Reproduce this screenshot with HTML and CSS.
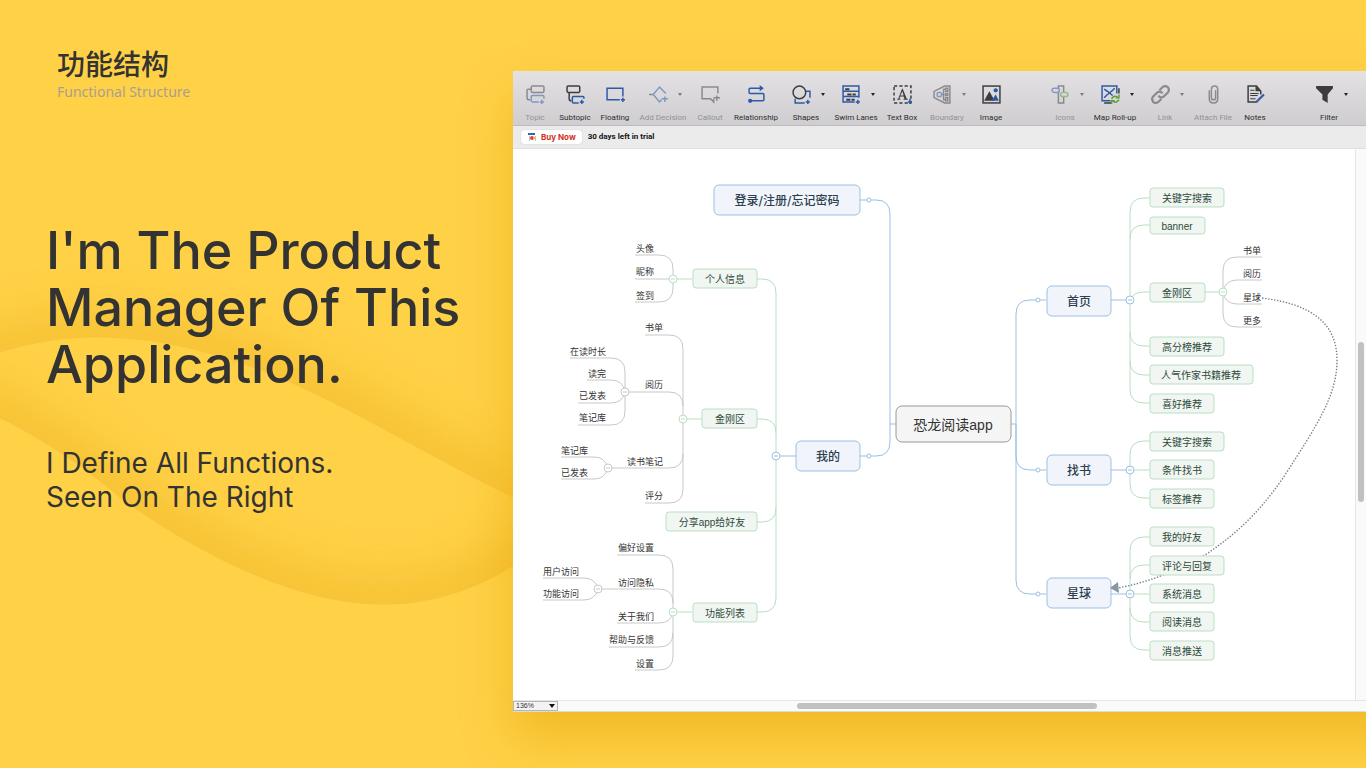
FILE: index.html
```html
<!DOCTYPE html>
<html lang="zh-CN">
<head>
<meta charset="utf-8">
<meta name="viewport" content="width=device-width, initial-scale=1">
<title>功能结构</title>
<link rel="stylesheet" href="styles.css">
</head>
<body>
<main class="page">
  <section class="intro">
    <svg class="wave" viewBox="0 0 513 768" preserveAspectRatio="none" aria-hidden="true">
      <defs>
        <filter id="soft" x="-20%" y="-40%" width="140%" height="180%"><feGaussianBlur stdDeviation="24"/></filter>
        <clipPath id="above"><path d="M0 0H513V497C440 462 370 418 290 382C240 360 170 337 98 337C70 337 40 340 0 352Z"/></clipPath>
        <clipPath id="inside"><path d="M0 352C40 340 70 337 98 337C170 337 240 360 290 382C370 418 440 462 513 497V565C480 588 430 604 385 604C290 604 190 548 120 497C90 472 50 442 0 418Z"/></clipPath>
      </defs>
      <g clip-path="url(#above)"><path class="wave-shade" filter="url(#soft)" d="M-60 372C-20 355 60 337 98 337C170 337 240 360 290 382C370 418 440 462 573 530"/></g>
      <g clip-path="url(#inside)"><path class="wave-shade" filter="url(#soft)" d="M-60 390L0 418C50 442 90 472 120 497C190 548 290 604 385 604C430 604 480 588 513 565L560 530"/></g>
    </svg>
    <header class="kicker">
      <h2 class="kicker-title">功能结构</h2>
      <p class="kicker-sub">Functional Structure</p>
    </header>
    <h1 class="headline">I'm The Product<br>Manager Of This<br>Application.</h1>
    <p class="lead">I Define All Functions.<br>Seen On The Right</p>
  </section>

  <section class="window">
    <nav class="toolbar" aria-label="Toolbar">
      <div class="tools tools-main">
        <button class="tool off"><span class="tool-icon"><svg viewBox="0 0 18 18"><rect x="5" y="1" width="12" height="6" rx="1"/><path d="M5 4H2Q1 4 1 5V12Q1 14 3 14H4"/><path class="b" d="M17 13V11Q17 10 16 10H6Q5 10 5 11V15Q5 16 6 16H12M15 14V18M13 16H17"/></svg></span><span>Topic</span></button>
        <button class="tool"><span class="tool-icon"><svg viewBox="0 0 18 18"><rect x="1" y="1" width="12" height="6" rx="1"/><path d="M3 7V13Q3 15 5 15"/><path class="b" d="M17 13V12Q17 11 16 11H7Q6 11 6 12V16Q6 17 7 17H12M15 14V18M13 16H17"/></svg></span><span>Subtopic</span></button>
        <button class="tool"><span class="tool-icon"><svg viewBox="0 0 18 18"><path class="b" d="M16 11V3H1V14H13M16 12V16M14 14H18"/></svg></span><span>Floating</span></button>
        <button class="tool off"><span class="tool-icon"><svg viewBox="0 0 18 18"><path d="M0 9H4"/><path class="b" d="M16 8L10 2L4 9L10 16L12 14M15 11V16M12 13H18"/></svg><i class="caret"></i></span><span>Add Decision</span></button>
        <button class="tool off"><span class="tool-icon"><svg viewBox="0 0 18 18"><path d="M16 8V2H1V13H9L12 16V13M15 10V15M12 12H18"/></svg></span><span>Callout</span></button>
        <button class="tool"><span class="tool-icon"><svg viewBox="0 0 18 18"><path class="b" d="M13 3H3Q2 3 2 4V7Q2 8 3 8H15Q16 8 16 9V14Q16 15 15 15H4"/><path class="bf" d="M12 0L16 3L12 6Z"/><circle class="bf" cx="3" cy="15" r="2"/></svg></span><span>Relationship</span></button>
        <button class="tool"><span class="tool-icon"><svg viewBox="0 0 18 18"><circle cx="7" cy="7" r="6"/><path class="b" d="M13 6H17V12M3 13V17H12M15 14V18M13 16H17"/></svg><i class="caret"></i></span><span>Shapes</span></button>
        <button class="tool"><span class="tool-icon"><svg viewBox="0 0 18 18"><path class="b" d="M16 12V1H1V16H12M1 6H16M1 11H16M15 14V18M13 16H17"/><path class="kf" d="M3 3H7V5H3ZM5 8H9V10H5ZM10 8H13V10H10ZM4 13H8V15H4ZM9 13H12V15H9Z"/></svg><i class="caret"></i></span><span>Swim Lanes</span></button>
        <button class="tool"><span class="tool-icon"><svg viewBox="0 0 18 18"><rect class="dash" x="1" y="1" width="16" height="16"/><path class="kf" d="M9 3L13 13H14V14H10V13H11L10 11H7L6 13H7V14H4V13H5L8 5ZM7 10H10L9 6Z"/><path class="b" d="M16 13V18M14 16H18"/></svg></span><span>Text Box</span></button>
        <button class="tool off"><span class="tool-icon"><svg viewBox="0 0 18 18"><path d="M16 1H11L1 6V12L11 17H16ZM8 9H11M12 4H10V14H12"/><rect x="12" y="3" width="2" height="3"/><rect x="12" y="8" width="2" height="2"/><rect x="12" y="12" width="2" height="3"/><rect class="b" x="4" y="7" width="4" height="4" rx="1"/></svg><i class="caret"></i></span><span>Boundary</span></button>
        <button class="tool"><span class="tool-icon"><svg viewBox="0 0 18 18"><rect x="1" y="1" width="16" height="16"/><path class="kf" d="M2 15L7 6L12 15Z"/><path class="bf" d="M9 15L13 9L16 15Z"/><circle class="bf" cx="13" cy="5" r="2"/></svg></span><span>Image</span></button>
      </div>
      <div class="tools tools-extra">
        <button class="tool off"><span class="tool-icon"><svg viewBox="0 0 18 18"><path d="M7 3V1H12V7M12 11V17H7V7"/><rect class="b" x="1" y="3" width="7" height="4" rx="2"/><rect class="g" x="9" y="7" width="7" height="4" rx="2"/></svg><i class="caret"></i></span><span>Icons</span></button>
        <button class="tool"><span class="tool-icon"><svg viewBox="0 0 18 18"><path d="M3 17H10M17 3V8"/><path class="b" d="M15 8V1H1V15H9M3 4L6 6M13 3L10 6M3 12L6 9M5 5L11 10M5 10L11 5"/><path class="g" d="M10 13Q13 9 16 12M17 9V12H14M17 14Q14 18 11 15M10 18V15H13"/></svg><i class="caret"></i></span><span>Map Roll-up</span></button>
        <button class="tool off"><span class="tool-icon"><svg viewBox="0 0 18 18"><path class="thick" d="M8 5L11 2Q13 0 16 2Q18 5 16 7L12 11Q9 13 7 10"/><path class="thick" d="M10 13L7 16Q4 18 2 16Q0 13 2 11L6 7Q9 5 11 8"/></svg><i class="caret"></i></span><span>Link</span></button>
        <button class="tool off"><span class="tool-icon"><svg viewBox="0 0 18 18"><path d="M11 5V12Q11 14 9 14Q7 14 7 12V4Q7 1 10 1Q13 1 13 4V13Q13 17 9 17Q5 17 5 13V5"/></svg></span><span>Attach File</span></button>
        <button class="tool"><span class="tool-icon"><svg viewBox="0 0 18 18"><path d="M14 9V6L10 1H2V16H10"/><path class="kf" d="M9 1L14 6H9Z"/><path class="thin" d="M4 5H8M4 8H12M4 10H11M4 13H9"/><path class="b thick" d="M11 15L17 9"/><path class="bf" d="M9 17L10 14L12 16Z"/></svg></span><span>Notes</span></button>
      </div>
      <div class="tools tools-filter">
        <button class="tool"><span class="tool-icon"><svg viewBox="0 0 18 18"><path class="kf" d="M1 1H17V3L12 9V17L7 14V9L1 3Z"/></svg><i class="caret"></i></span><span>Filter</span></button>
      </div>
    </nav>

    <div class="trial">
      <button class="buy"><svg viewBox="0 0 8 8" aria-hidden="true"><path fill="#fff" d="M0 1H8V8H0Z"/><path fill="#3566b0" d="M0 0H7V2H0Z"/><path fill="#b9c4d6" d="M1 3H2V8H1ZM7 3H8V8H7Z"/><circle fill="#e2452d" cx="4" cy="5" r="2"/><path fill="#f4a83a" d="M5 4H7V6H5Z"/></svg>Buy Now</button>
      <strong>30 days left in trial</strong>
    </div>

    <div class="workspace">
      <div class="canvas">
        <svg class="map" width="842" height="551" viewBox="513 149 842 551" role="img" aria-label="恐龙阅读app 功能结构">
          <g class="line gray">
            <path d="M635 255H659Q673 255 673 269V288Q673 302 659 302H635M635 279H673"/>
            <path d="M645 335H669Q683 335 683 349V489Q683 503 669 503H645M625 392H669Q683 392 683 406M608 468H669Q683 468 683 454"/>
            <path d="M570 358H611Q625 358 625 372V411Q625 425 611 425H578M587 380H611Q623 380 625 392Q623 403 611 403H578"/>
            <path d="M561 457H594Q605 457 608 468Q605 479 594 479H561"/>
            <path d="M617 555H659Q673 555 673 569V656Q673 670 659 670H635M598 589H659Q673 589 673 603M617 623H659Q671 623 673 612M609 647H659Q673 647 673 633"/>
            <path d="M543 578H584Q595 578 598 589Q595 600 584 600H543"/>
            <path d="M1262 257H1237Q1223 257 1223 271V313Q1223 327 1237 327H1262M1262 280H1237Q1225 280 1223 292Q1225 304 1237 304H1262"/>
          </g>
          <g class="line green">
            <path d="M673 279H692M683 419H702M673 612H692M1205 292H1223"/>
            <path d="M757 279H762Q776 279 776 293V598Q776 612 762 612H757M757 419H762Q776 419 776 433M757 522H762Q776 522 776 508"/>
            <path d="M1150 198H1144Q1130 198 1130 212V389Q1130 403 1144 403H1150M1150 225H1144Q1130 225 1130 239M1150 292H1144Q1133 292 1130 300M1150 346H1144Q1130 346 1130 332M1150 375H1144Q1130 375 1130 361"/>
            <path d="M1150 441H1144Q1130 441 1130 455V484Q1130 498 1144 498H1150M1130 470H1150"/>
            <path d="M1150 537H1144Q1130 537 1130 551V636Q1130 650 1144 650H1150M1150 565H1144Q1130 565 1130 579M1130 594H1150M1150 622H1144Q1130 622 1130 608"/>
          </g>
          <g class="line blue">
            <path d="M860 200H876Q890 200 890 214V442Q890 456 876 456H860M890 424H896M776 456H796"/>
            <path d="M1046 300H1030Q1016 300 1016 314V580Q1016 594 1030 594H1046M1011 424H1016V456Q1016 470 1030 470H1046M1111 300H1130M1111 470H1130M1111 594H1130"/>
            <circle cx="869" cy="200" r="2"/><circle cx="869" cy="456" r="2"/><circle cx="1038" cy="300" r="2"/><circle cx="1038" cy="470" r="2"/><circle cx="1038" cy="594" r="2"/>
            <circle cx="776" cy="456" r="4"/><circle cx="1130" cy="300" r="4"/><circle cx="1130" cy="470" r="4"/><circle cx="1130" cy="594" r="4"/>
            <path d="M774 456H778M1128 300H1132M1128 470H1132M1128 594H1132"/>
          </g>
          <g class="line green">
            <circle cx="673" cy="279" r="4"/><circle cx="683" cy="419" r="4"/><circle cx="673" cy="612" r="4"/><circle cx="1223" cy="292" r="4"/>
            <path d="M671 279H675M681 419H685M671 612H675M1221 292H1225"/>
          </g>
          <g class="line gray">
            <circle cx="625" cy="392" r="4"/><circle cx="608" cy="468" r="4"/><circle cx="598" cy="589" r="4"/>
            <path d="M623 392H627M606 468H610M596 589H600"/>
          </g>
          <path class="relation" d="M1262 298C1310 304 1337 322 1337 360C1337 395 1318 424 1283 478C1258 514 1235 535 1205 555C1180 568 1155 581 1118 588"/>

          <g class="node root"><rect x="896" y="406" width="115" height="36" rx="6"/><text x="953" y="430">恐龙阅读app</text></g>
          <g class="node main">
            <rect x="714" y="185" width="146" height="30" rx="5"/><text x="787" y="205">登录/注册/忘记密码</text>
            <rect x="796" y="441" width="64" height="30" rx="5"/><text x="828" y="461">我的</text>
            <rect x="1047" y="286" width="64" height="30" rx="5"/><text x="1079" y="306">首页</text>
            <rect x="1047" y="455" width="64" height="30" rx="5"/><text x="1079" y="475">找书</text>
            <rect x="1047" y="578" width="64" height="30" rx="5"/><text x="1079" y="598">星球</text>
          </g>
          <g class="node sub">
            <rect x="693" y="269" width="64" height="19" rx="3"/><text x="725" y="283">个人信息</text>
            <rect x="702" y="409" width="55" height="19" rx="3"/><text x="730" y="423">金刚区</text>
            <rect x="666" y="512" width="91" height="19" rx="3"/><text x="712" y="526">分享app给好友</text>
            <rect x="693" y="603" width="64" height="19" rx="3"/><text x="725" y="617">功能列表</text>
            <rect x="1150" y="188" width="74" height="19" rx="3"/><text x="1187" y="202">关键字搜索</text>
            <rect x="1150" y="217" width="55" height="17" rx="3"/><text x="1177" y="230">banner</text>
            <rect x="1150" y="283" width="55" height="19" rx="3"/><text x="1177" y="297">金刚区</text>
            <rect x="1150" y="337" width="74" height="19" rx="3"/><text x="1187" y="351">高分榜推荐</text>
            <rect x="1150" y="365" width="103" height="19" rx="3"/><text x="1201" y="379">人气作家书籍推荐</text>
            <rect x="1150" y="394" width="64" height="19" rx="3"/><text x="1182" y="408">喜好推荐</text>
            <rect x="1150" y="432" width="74" height="19" rx="3"/><text x="1187" y="446">关键字搜索</text>
            <rect x="1150" y="460" width="64" height="19" rx="3"/><text x="1182" y="474">条件找书</text>
            <rect x="1150" y="489" width="64" height="19" rx="3"/><text x="1182" y="503">标签推荐</text>
            <rect x="1150" y="527" width="64" height="19" rx="3"/><text x="1182" y="541">我的好友</text>
            <rect x="1150" y="556" width="74" height="19" rx="3"/><text x="1187" y="570">评论与回复</text>
            <rect x="1150" y="584" width="64" height="19" rx="3"/><text x="1182" y="598">系统消息</text>
            <rect x="1150" y="612" width="64" height="19" rx="3"/><text x="1182" y="626">阅读消息</text>
            <rect x="1150" y="641" width="64" height="19" rx="3"/><text x="1182" y="655">消息推送</text>
          </g>
          <g class="leaf">
            <text x="654" y="252">头像</text><text x="654" y="275">昵称</text><text x="654" y="299">签到</text>
            <text x="663" y="331">书单</text><text x="663" y="388">阅历</text><text x="663" y="465">读书笔记</text><text x="663" y="499">评分</text>
            <text x="606" y="355">在读时长</text><text x="606" y="377">读完</text><text x="606" y="399">已发表</text><text x="606" y="421">笔记库</text>
            <text x="588" y="454">笔记库</text><text x="588" y="476">已发表</text>
            <text x="654" y="551">偏好设置</text><text x="654" y="586">访问隐私</text><text x="654" y="620">关于我们</text><text x="654" y="643">帮助与反馈</text><text x="654" y="667">设置</text>
            <text x="579" y="575">用户访问</text><text x="579" y="597">功能访问</text>
            <text x="1261" y="254">书单</text><text x="1261" y="277">阅历</text><text x="1261" y="301">星球</text><text x="1261" y="324">更多</text>
          </g>
          <path class="arrow" d="M1110 588L1118 582L1119 593Z"/>
        </svg>
      </div>
      <div class="scroll-y"><span class="thumb"></span></div>
    </div>

    <footer class="status">
      <label class="zoom"><select aria-label="Zoom"><option>136%</option></select></label>
      <div class="scroll-x"><span class="thumb"></span></div>
    </footer>
  </section>
</main>
</body>
</html>
```
FILE: styles.css
```css
* { box-sizing: border-box; }

body {
  margin: 0;
  background: #ffd147;
  color: #333;
  font-family: Inter, "Noto Sans CJK SC", sans-serif;
}

h1, h2, p { margin: 0; }

button, select {
  margin: 0;
  padding: 0;
  border: 0;
  background: none;
  color: inherit;
  font: inherit;
}

.page {
  display: grid;
  grid-template-columns: 513fr 853fr;
  min-height: 100vh;
  overflow: hidden;
}

/* Left column */
.intro {
  position: relative;
  padding: 48px 0 48px 46px;
}

.wave {
  position: absolute;
  inset: 0;
  width: 100%;
  height: 100%;
}

.wave-shade {
  fill: none;
  stroke: #eeb422;
  stroke-width: 44;
  opacity: 0.6;
}

.kicker {
  position: relative;
  margin-bottom: 120px;
  padding-left: 11px;
}

.kicker-title {
  font-size: 28px;
  font-weight: 500;
  line-height: 34px;
}

.kicker-sub {
  color: #a9a091;
  font-family: "Noto Sans", sans-serif;
  font-size: 14px;
  line-height: 20px;
}

.headline {
  position: relative;
  margin-bottom: 53px;
  font-size: 52px;
  font-weight: 500;
  line-height: 57px;
  white-space: nowrap;
}

.lead {
  position: relative;
  font-size: 28px;
  line-height: 34px;
}

/* Application window: its right side runs on past the edge of the page */
.window {
  position: relative;
  display: flex;
  flex-direction: column;
  min-width: 0;
  margin: 71px -80px 57px 0;
  padding-right: 80px;
  background: #fff;
  box-shadow: 0 26px 46px rgba(226, 160, 0, 0.48);
}

.toolbar {
  display: flex;
  justify-content: space-between;
  height: 55px;
  padding: 14px 13px 0 2px;
  border-bottom: 1px solid #bdbcbd;
  background: linear-gradient(#e3e1e3, #cfcdcf);
}

.tools { display: grid; }
.tools-main { grid-template-columns: 40px 40px 40px 56px 38px 54px 46px 54px 38px 52px 36px; }
.tools-extra { grid-template-columns: 48px 52px 48px 48px 36px; }
.tools-filter { grid-template-columns: 48px; }

.tool {
  display: flex;
  flex-direction: column;
  align-items: center;
  gap: 9px;
  color: #2e2e2e;
  font-family: Roboto, sans-serif;
  font-size: 8px;
  line-height: 10px;
  white-space: nowrap;
}

.tool-icon {
  display: flex;
  align-items: center;
  gap: 10px;
}

.tool-icon svg {
  width: 19px;
  height: 19px;
  overflow: visible;
  fill: none;
  stroke: #3c3c3e;
  stroke-width: 1.4;
}

.caret {
  margin-right: -4px;
  border: 2px solid transparent;
  border-top: 3px solid #222;
  border-bottom: 0;
}

.tool .b { stroke: #2c5aa8; }
.tool .g { stroke: #5d9c3a; }
.tool .bf { fill: #2c5aa8; stroke: none; }
.tool .kf { fill: #3c3c3e; stroke: none; fill-rule: evenodd; }
.tool .dash { stroke-dasharray: 3 2; }
.tool .thin { stroke-width: 1; }
.tool .thick { stroke-width: 2; }

.off { color: #929194; }
.off svg { opacity: 0.5; }
.off .caret { opacity: 0.5; }

.trial {
  display: flex;
  align-items: center;
  gap: 6px;
  height: 23px;
  padding-left: 8px;
  border-bottom: 1px solid #e0e0e0;
  background: #ebebeb;
  color: #111;
  font-size: 8px;
  line-height: 14px;
}

.trial strong { font-family: Roboto, sans-serif; }

.buy {
  display: flex;
  align-items: center;
  gap: 5px;
  padding: 0 6px 0 7px;
  border-radius: 3px;
  background: #fff;
  box-shadow: 0 0 1px rgba(0, 0, 0, 0.3);
  color: #cf2f1e;
  font-weight: 700;
}

.buy svg { width: 8px; height: 8px; }

.workspace {
  display: flex;
  flex: 1;
}

.canvas {
  flex: 1;
  min-width: 0;
  overflow: hidden;
}

.map {
  display: block;
}

.line {
  fill: none;
  stroke-width: 1;
}

.line circle { fill: #fff; }
.gray { stroke: #c8c8c8; }
.green { stroke: #b9dfc3; }
.blue { stroke: #9cbfe4; }

.node text { text-anchor: middle; }
.node rect { stroke-width: 1; }

.root text, .sub text { font-family: "Liberation Sans", "Noto Sans CJK SC", sans-serif; }
.root rect { fill: #f5f5f5; stroke: #999; }
.root text { fill: #333; font-size: 14px; }
.main rect { fill: #f1f5fb; stroke: #9cbfe4; }
.main text { fill: #2d3f4e; font-size: 12px; font-weight: 500; }
.sub rect { fill: #f1f6f2; stroke: #b9dfc3; }
.sub text { fill: #2d4a3a; font-size: 10px; }
.leaf text { fill: #333; font-size: 9px; text-anchor: end; }

.relation {
  fill: none;
  stroke: #77808c;
  stroke-width: 1.4;
  stroke-dasharray: 1.4 1.6;
}

.arrow { fill: #8b959f; }

.scroll-y {
  display: grid;
  grid-template-rows: 35fr 29fr 36fr;
  width: 11px;
  padding: 0 2px;
  border-left: 1px solid #e6e6e6;
  background: #fafafa;
}

.scroll-y .thumb { grid-row: 2; }

.thumb {
  border-radius: 3px;
  background: #c1c1c1;
}

.status {
  display: flex;
  height: 12px;
  border-top: 1px solid #e6e6e6;
  border-bottom: 1px solid #dcdcdc;
  background: #fafafa;
}

.zoom {
  position: relative;
  display: flex;
  width: 45px;
  border: 1px solid #b5b5b5;
  background: #f3f3f3;
}

.zoom::after {
  content: "";
  position: absolute;
  top: 2px;
  right: 2px;
  border: 3px solid transparent;
  border-top: 4px solid #111;
  border-bottom: 0;
  pointer-events: none;
}

.zoom select {
  width: 100%;
  padding-left: 2px;
  appearance: none;
  font-family: "Liberation Sans", sans-serif;
  font-size: 7px;
  line-height: 8px;
}

.scroll-x {
  display: grid;
  flex: 1;
  grid-template-columns: 239fr 300fr 269fr;
  padding: 2px 0;
}

.scroll-x .thumb { grid-column: 2; }
```
